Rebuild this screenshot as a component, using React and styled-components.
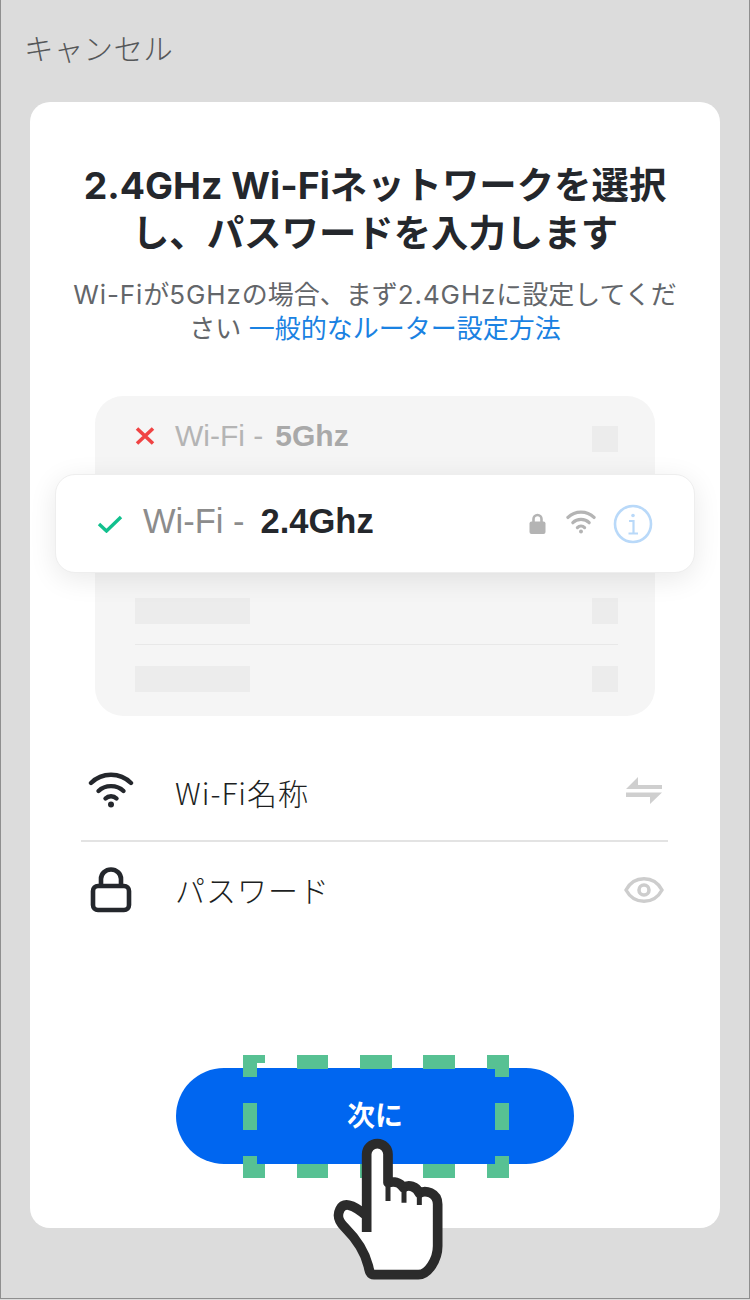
import React from 'react';
import styled, {createGlobalStyle} from 'styled-components';

const sans = `Inter, "Liberation Sans", "Noto Sans CJK JP", sans-serif`;
const helv = `"Liberation Sans", sans-serif`;
const jp = `"Noto Sans CJK JP", sans-serif`;

const GlobalStyle = createGlobalStyle`
  html, body {
    margin: 0;
    padding: 0;
    background: #dcdcdc;
  }
`;

const Frame = styled.div`
  box-sizing: border-box;
  width: 750px;
  height: 1299px;
  display: flex;
  flex-direction: column;
  background: #dcdcdc;
  border: 1px solid #8f8f8f;
  border-top: none;
  font-family: ${sans};
  overflow: hidden;
`;

const Header = styled.div`
  height: 102px;
  flex: none;
  display: flex;
  align-items: center;
  padding: 0 0 9px 23px;
  box-sizing: border-box;
  font-family: ${jp};
  font-size: 29.5px;
  font-weight: 300;
  letter-spacing: 0.3px;
  color: #555759;
`;

const Card = styled.div`
  margin: 0 29px;
  height: 1126px;
  flex: none;
  box-sizing: border-box;
  padding: 60px 0 64px;
  display: flex;
  flex-direction: column;
  align-items: center;
  background: #fff;
  border-radius: 20px;
`;

const Title = styled.h1`
  margin: 0;
  font-family: ${sans};
  font-size: 37.4px;
  font-weight: 700;
  line-height: 48px;
  color: #24272c;
  text-align: center;
  white-space: nowrap;
`;

const Subtitle = styled.p`
  margin: 20px 0 0;
  font-size: 26px;
  line-height: 34px;
  color: #63666a;
  text-align: center;
  white-space: nowrap;
`;

const Latin = styled.span`
  letter-spacing: 0.9px;
`;

const Link = styled.span`
  color: #1a82e2;
`;

const Panel = styled.div`
  position: relative;
  align-self: center;
  width: 560px;
  height: 320px;
  margin-top: 50px;
  box-sizing: border-box;
  padding: 30px 37px 0 40px;
  background: #f5f5f5;
  border-radius: 28px;
`;

const PanelRow = styled.div`
  display: flex;
  align-items: center;
  justify-content: space-between;
  height: 26px;
  margin-top: ${p => p.$top || 0}px;
`;

const PanelLabel = styled.div`
  display: flex;
  align-items: center;
  gap: 20px;
  font-family: ${helv};
  font-size: 30px;
  color: #b4b4b4;
`;

const LabelText = styled.span`
  padding-bottom: ${p => p.$lift}px;
`;

const Bar = styled.div`
  width: 115px;
  height: 26px;
  background: #ececec;
`;

const Square = styled.div`
  width: 26px;
  height: 26px;
  background: #ececec;
`;

const PanelLine = styled.div`
  height: 1px;
  margin-top: 20px;
  background: #e8e8e8;
`;

const Strong = styled.b`
  margin-left: ${p => p.$gap}px;
  font-weight: 700;
  color: ${p => p.$color};
`;

const Floating = styled.div`
  position: absolute;
  left: -40px;
  top: 78px;
  width: 640px;
  height: 99px;
  box-sizing: border-box;
  padding: 0 41px;
  display: flex;
  align-items: center;
  justify-content: space-between;
  background: #fff;
  border: 1px solid #eeeeee;
  border-radius: 20px;
  box-shadow: 0 6px 28px rgba(0, 0, 0, 0.09);
`;

const FloatingLabel = styled.div`
  display: flex;
  align-items: center;
  gap: 20px;
  font-family: ${helv};
  font-size: 34.5px;
  color: #8c8c8c;
`;

const FloatingIcons = styled.div`
  display: flex;
  align-items: center;
  gap: 17px;
`;

const Form = styled.div`
  align-self: stretch;
  margin: 29px 52px 0 51px;
`;

const Field = styled.div`
  display: flex;
  align-items: center;
  height: ${p => (p.$divider ? 97 : 95)}px;
  box-sizing: border-box;
  padding-right: 4px;
  border-bottom: ${p => (p.$divider ? '2px solid #e3e3e3' : 'none')};
`;

const FieldIcon = styled.div`
  width: 94px;
  flex: none;
  display: flex;
  justify-content: center;
  box-sizing: border-box;
  padding: 0 35px ${p => p.$lift || 0}px 1px;
`;

const FieldLabel = styled.div`
  flex: 1;
  padding-bottom: 2px;
  font-family: ${jp};
  font-size: 30px;
  font-weight: 300;
  letter-spacing: 1px;
  color: #1d1f22;
`;

const Trailing = styled.div`
  display: flex;
  padding-bottom: ${p => p.$lift || 0}px;
  margin-right: ${p => p.$right || 0}px;
`;

const ButtonArea = styled.div`
  position: relative;
  margin-top: auto;
  width: 398px;
  height: 96px;
`;

const NextButton = styled.div`
  width: 100%;
  height: 100%;
  box-sizing: border-box;
  padding-bottom: 4px;
  display: flex;
  align-items: center;
  justify-content: center;
  background: #0066f0;
  border-radius: 48px;
  font-family: ${jp};
  font-size: 28px;
  font-weight: 700;
  color: #fff;
`;

const FocusBox = styled.svg`
  position: absolute;
  left: 67px;
  top: -13px;
`;

const Hand = styled.svg`
  position: absolute;
  left: 154px;
  top: 68px;
`;

const CrossIcon = () => (
  <svg width="20" height="18" viewBox="0 0 20 18">
    <path d="M2 1.5 L18 16.5 M18 1.5 L2 16.5" stroke="#f04343" strokeWidth="3.6" fill="none" />
  </svg>
);

const CheckIcon = () => (
  <svg width="26" height="18" viewBox="0 0 26 18">
    <path d="M2 9 L9.5 16 L24 2" stroke="#12c08e" strokeWidth="3.4" fill="none" />
  </svg>
);

const SmallLock = () => (
  <svg width="20" height="21" viewBox="0 0 20 21">
    <path d="M4.5 10 V6 a4 4 0 0 1 8 0 V10" stroke="#b4b4b4" strokeWidth="2.6" fill="none" />
    <rect x="0.5" y="8.5" width="16" height="12.5" rx="2" fill="#b4b4b4" />
  </svg>
);

const WifiIcon = ({size, height, color, width: sw}) => (
  <svg width={size} height={height} viewBox="0 0 46 36" fill="none" stroke={color} strokeWidth={sw} strokeLinecap="round">
    <path d="M3 11 C14 0 32 0 43 11" />
    <path d="M10.5 19 C17 12.5 29 12.5 35.5 19" />
    <path d="M17.5 26.5 C20.5 23.5 25.5 23.5 28.5 26.5" />
    <circle cx="23" cy="32.5" r="3" fill={color} stroke="none" />
  </svg>
);

const InfoIcon = () => (
  <svg width="40" height="40" viewBox="0 0 40 40" fill="none" stroke="#b9d9f9">
    <circle cx="20" cy="20" r="18" strokeWidth="2.6" />
    <circle cx="20" cy="11.5" r="1.8" fill="#b9d9f9" stroke="none" />
    <path d="M16 17 H20.5 V29 M15.5 29.5 H25" strokeWidth="2.2" />
  </svg>
);

const BigLock = () => (
  <svg width="42" height="46" viewBox="0 0 42 46" fill="none" stroke="#24272c" strokeWidth="4.6">
    <path d="M11 19 V12 a10 9.5 0 0 1 20 0 V19" />
    <rect x="3" y="19" width="36" height="24" rx="5" />
  </svg>
);

const SwapIcon = () => (
  <svg width="36" height="27" viewBox="0 0 36 27" fill="#cfcfcf">
    <path d="M0 12 L12 0 V8 H36 V12 Z" />
    <path d="M0 15.5 H36 L24 27 V20 H0 Z" />
  </svg>
);

const EyeIcon = () => (
  <svg width="40" height="28" viewBox="0 0 40 28" fill="none" stroke="#cdcdcd">
    <path d="M2 14 C10 -1 30 -1 38 14 C30 29 10 29 2 14 Z" strokeWidth="3.4" />
    <circle cx="20" cy="14" r="5" strokeWidth="3.6" />
  </svg>
);

const dashes = [
  'M0 22 V0 H22 V8 H14 V22 Z',
  'M54 0 H85 V14 H54 Z',
  'M117 0 H149 V14 H117 Z',
  'M180 0 H212 V14 H180 Z',
  'M244 0 H266 V22 H252 V14 H244 Z',
  'M0 48 H14 V75 H0 Z',
  'M252 48 H266 V75 H252 Z',
  'M0 101 H14 V109 H22 V123 H0 Z',
  'M54 109 H85 V123 H54 Z',
  'M117 109 H149 V123 H117 Z',
  'M180 109 H212 V123 H180 Z',
  'M252 101 H266 V123 H244 V109 H252 Z',
];

export default function App() {
  return (
    <>
      <GlobalStyle />
      <Frame>
        <Header>キャンセル</Header>
        <Card>
          <Title>
            2.4GHz Wi-Fiネットワークを選択
            <br />
            し、パスワードを入力します
          </Title>
          <Subtitle>
            <Latin>Wi-Fi</Latin>が<Latin>5GHz</Latin>の場合、まず<Latin>2.4GHz</Latin>に設定してくだ
            <br />
            さい <Link>一般的なルーター設定方法</Link>
          </Subtitle>

          <Panel>
            <PanelRow>
              <PanelLabel>
                <Trailing $lift={6}>
                  <CrossIcon />
                </Trailing>
                <LabelText $lift={6}>Wi-Fi -<Strong $gap={12} $color="#a9a9a9">5Ghz</Strong></LabelText>
              </PanelLabel>
              <Square />
            </PanelRow>
            <PanelRow $top={146}>
              <Bar />
              <Square />
            </PanelRow>
            <PanelLine />
            <PanelRow $top={21}>
              <Bar />
              <Square />
            </PanelRow>
            <Floating>
              <FloatingLabel>
                <CheckIcon />
                <LabelText $lift={4}>Wi-Fi -<Strong $gap={16} $color="#24272c">2.4Ghz</Strong></LabelText>
              </FloatingLabel>
              <FloatingIcons>
                <SmallLock />
                <Trailing $lift={3}>
                  <WifiIcon size={30} height={24} color="#b4b4b4" width={5} />
                </Trailing>
                <InfoIcon />
              </FloatingIcons>
            </Floating>
          </Panel>

          <Form>
            <Field $divider>
              <FieldIcon $lift={5}>
                <WifiIcon size={46} height={36} color="#24272c" width={4.4} />
              </FieldIcon>
              <FieldLabel>Wi-Fi名称</FieldLabel>
              <Trailing $lift={4} $right={2}>
                <SwapIcon />
              </Trailing>
            </Field>
            <Field>
              <FieldIcon>
                <BigLock />
              </FieldIcon>
              <FieldLabel>パスワード</FieldLabel>
              <Trailing>
                <EyeIcon />
              </Trailing>
            </Field>
          </Form>

          <ButtonArea>
            <NextButton>次に</NextButton>
            <FocusBox width="266" height="123" viewBox="0 0 266 123" fill="#57c193">
              {dashes.map((d, i) => <path key={i} d={d} />)}
            </FocusBox>
            <Hand width="120" height="150" viewBox="480 290 360 450" fill="none" stroke="#2b2b2b" strokeWidth="29" strokeLinejoin="round" strokeLinecap="butt">
              <path
                fill="#fff"
                d="M590 578 L590 345 A32 32 0 0 1 654 345 L654 430 C670 425 690 428 700 445 C715 435 740 440 748 462 C765 450 803 460 803 495 L803 620 C803 660 775 706 745 706 L612 706 C600 706 598 695 595 680 C585 640 560 600 525 565 C505 545 500 530 510 510 C520 490 545 490 590 530"
              />
              <path d="M654 425 V485 M702 445 V490 M748 462 V497" strokeWidth="15" />
            </Hand>
          </ButtonArea>
        </Card>
      </Frame>
    </>
  );
}
